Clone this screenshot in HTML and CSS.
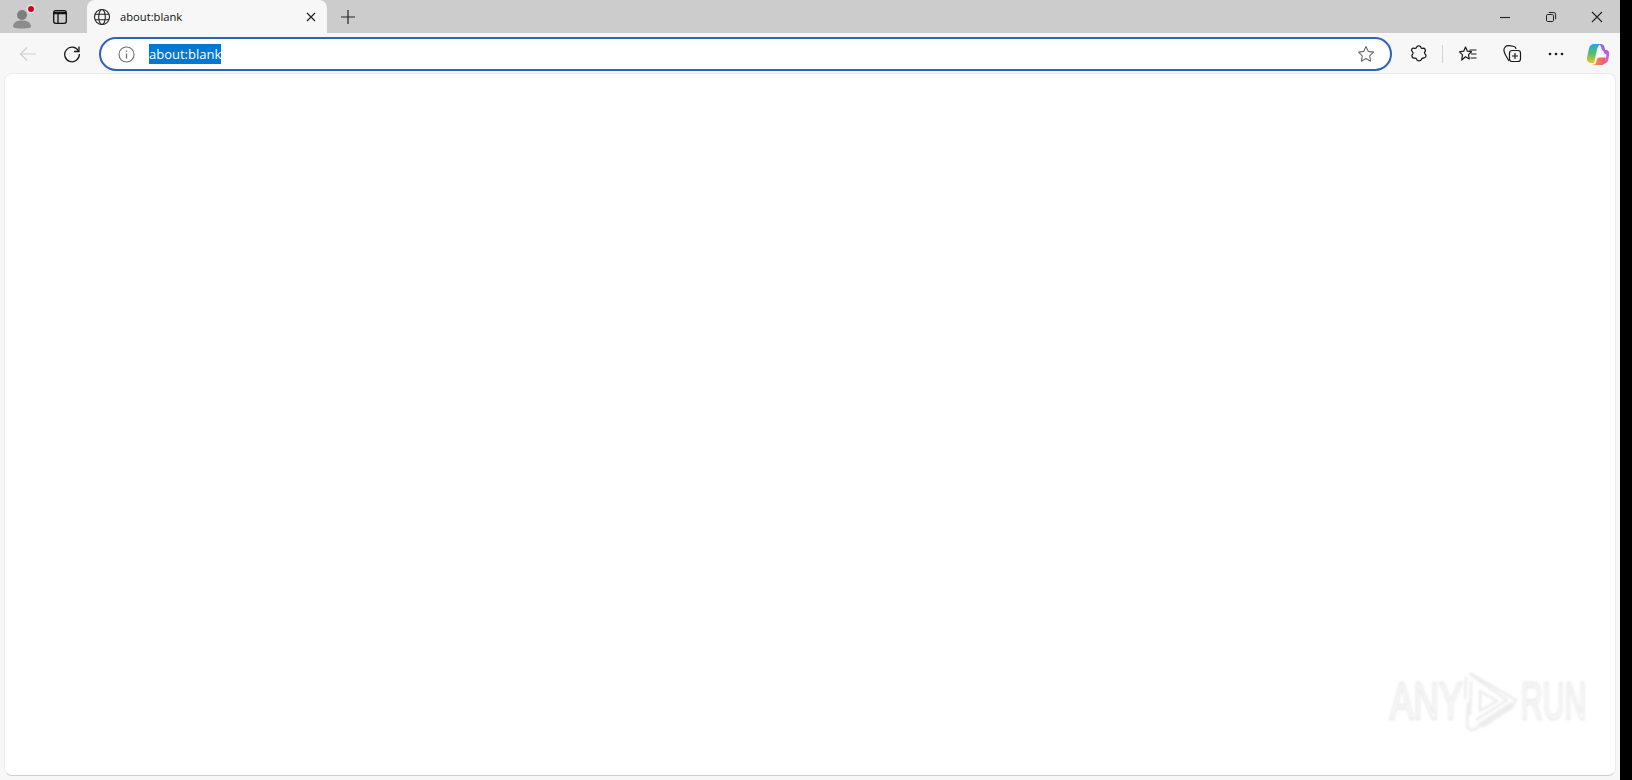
FILE: index.html
```html
<!DOCTYPE html>
<html>
<head>
  <title>about:blank</title>
  <link rel="stylesheet" href="styles.css">
</head>
<body>
  <div class="window">
    <!-- Tab strip -->
    <div class="tabstrip">
      <div class="btn profile">
        <svg width="26" height="26" viewBox="0 0 26 26">
          <circle cx="11" cy="11" r="5" fill="#7e7e7e"/>
          <path d="M2 23c0-5 4-6.500 9-6.500s9 1.500 9 6.500c-2 2-16 2-18 0z" fill="#8c8c8c"/>
          <circle cx="20" cy="5" r="4.500" fill="#f2f2f2" fill-opacity=".7"/>
          <circle cx="20" cy="5" r="3" fill="#d8001c"/>
        </svg>
      </div>
      <div class="btn sidebar">
        <svg width="16" height="16" viewBox="0 0 16 16" fill="none" stroke="#111" stroke-width="1.300">
          <rect x="1.700" y="1.700" width="12.600" height="12.600" rx="2"/>
          <path d="M1.700 4h12.600" stroke-width="2.500"/>
          <path d="M6 5v9"/>
        </svg>
      </div>
      <div class="tab">
        <svg class="tab-globe" width="18" height="18" viewBox="0 0 18 18" fill="none" stroke="#222" stroke-width="1.100">
          <circle cx="9" cy="9" r="7.500"/>
          <ellipse cx="9" cy="9" rx="3.300" ry="7.500"/>
          <path d="M2 6.300h14M2 11.700h14"/>
        </svg>
        <span class="tab-title">about:blank</span>
        <svg class="tab-close" width="10" height="10" viewBox="0 0 10 10" stroke="#222" stroke-width="1.200">
          <path d="M1 1l8 8M9 1l-8 8"/>
        </svg>
      </div>
      <div class="btn newtab">
        <svg width="16" height="16" viewBox="0 0 16 16" stroke="#222" stroke-width="1.200">
          <path d="M8 1v14M1 8h14"/>
        </svg>
      </div>
      <div class="winbtns">
        <div class="winbtn">
          <svg width="12" height="12" viewBox="0 0 12 12" stroke="#222" stroke-width="1.100"><path d="M1 6.500h10"/></svg>
        </div>
        <div class="winbtn">
          <svg width="12" height="12" viewBox="0 0 12 12" fill="none" stroke="#222" stroke-width="1"><rect x="1.500" y="3.500" width="7" height="7" rx="1.200"/><path d="M3.800 1.500h5a1.800 1.800 0 0 1 1.800 1.800v5"/></svg>
        </div>
        <div class="winbtn">
          <svg width="12" height="12" viewBox="0 0 12 12" stroke="#222" stroke-width="1.100"><path d="M1 1l10 10M11 1L1 11"/></svg>
        </div>
      </div>
    </div>

    <!-- Toolbar -->
    <div class="toolbar">
      <div class="btn back">
        <svg width="18" height="16" viewBox="0 0 18 16" fill="none" stroke="#cfcfcf" stroke-width="1.200"><path d="M17 8H1.500M8 1.500L1.500 8 8 14.500"/></svg>
      </div>
      <div class="btn reload">
        <svg width="18" height="18" viewBox="0 0 18 18" fill="none" stroke="#1a1a1a" stroke-width="1.300"><path d="M15.600 6.300A7.300 7.300 0 1 0 16.300 9"/><path d="M16 1.500v5h-5"/></svg>
      </div>
      <div class="address">
        <svg class="info" width="17" height="17" viewBox="0 0 17 17" fill="none" stroke="#707070" stroke-width="1.100">
          <circle cx="8.500" cy="8.500" r="7.500"/>
          <path d="M8.500 7.500v5" stroke-width="1.300"/>
          <path d="M8.500 4.500v1.300" stroke-width="1.300"/>
        </svg>
        <span class="url">about:blank</span>
        <svg class="addr-star" width="18" height="18" viewBox="0 0 18 18" fill="none" stroke="#6a6a6a" stroke-width="1.100" stroke-linejoin="round">
          <path d="M9 1.500l2.300 4.900 5.200.7-3.800 3.700.9 5.400L9 13.600l-4.600 2.600.9-5.400L1.500 7.100l5.200-.7z"/>
        </svg>
      </div>
      <div class="btn tool">
        <svg width="20" height="20" viewBox="0 0 20 20" fill="none" stroke="#1a1a1a" stroke-width="1.300" stroke-linejoin="round">
          <path d="M7.500 3.500C8 1.300 11.500 1.300 12 3.500c.2.700 1 1 1.700.8 2.200-.5 3.500 2 2.200 3.500-.5.600-.5 1.500 0 2 2 1.700 1 4.400-1.700 4.200-.8 0-1.400.4-1.700 1.200-.8 2.300-4.200 2.300-5-.1-.2-.7-1-1.100-1.800-1-2.400.3-3.700-2.300-2.100-4 .6-.7.600-1.600 0-2.200C1.300 6 3 3.700 5.700 4.300c.8.100 1.500-.200 1.800-.8z"/>
        </svg>
      </div>
      <div class="divider"></div>
      <div class="btn tool">
        <svg width="20" height="18" viewBox="0 0 20 18" fill="none" stroke="#1a1a1a" stroke-width="1.200" stroke-linejoin="round">
          <path d="M7.500 2l1.900 4.200 4.100.5-3 2.900.8 4.400-3.800-2.200-3.800 3.200.8-5.200L1.500 6.800l4.200-.6z"/>
          <path d="M11.500 5h7M13 9h5.500M12.500 13h6"/>
        </svg>
      </div>
      <div class="btn tool">
        <svg width="20" height="20" viewBox="0 0 20 20" fill="none" stroke="#1a1a1a" stroke-width="1.200">
          <path d="M7 17L3.500 11C2.500 9 1 6 2.500 4l1-1.300C4.500 1.700 6 1.500 7.500 1.700l4.500.8c1.300.3 2 1.200 2 2.500"/>
          <rect x="7.500" y="6.500" width="11" height="11" rx="2.500"/>
          <path d="M13 9v6M10 12h6"/>
        </svg>
      </div>
      <div class="btn tool">
        <svg width="16" height="4" viewBox="0 0 16 4" fill="#1a1a1a"><circle cx="2" cy="2" r="1.300"/><circle cx="8" cy="2" r="1.300"/><circle cx="14" cy="2" r="1.300"/></svg>
      </div>
      <div class="btn tool copilot">
        <svg width="24" height="23" viewBox="0 0 24 23" fill="none">
          <defs>
            <linearGradient id="cpA" x1="0" y1="0" x2="0" y2="1"><stop offset="0" stop-color="#2f9fe6"/><stop offset=".5" stop-color="#4fc26a"/><stop offset="1" stop-color="#f4c02f"/></linearGradient>
            <linearGradient id="cpB" x1="0" y1="0" x2="0" y2="1"><stop offset="0" stop-color="#8f63ee"/><stop offset="1" stop-color="#ea5fb4"/></linearGradient>
            <linearGradient id="cpC" x1="0" y1="0" x2="1" y2="0"><stop offset="0" stop-color="#f8a93a"/><stop offset="1" stop-color="#ee4f72"/></linearGradient>
          </defs>
          <path d="M8 1h8c-3 .5-4 2-4.800 5L8 20H6C2.500 20 .5 18 1 14.500L3 5.500C3.500 2.500 5.500 1 8 1z" fill="url(#cpA)"/>
          <path d="M13 1h1.500c2 0 3.500 1 4 3l.5 3h1c2.300 0 3.500 1.700 3.200 4l-1 6c-.4 2.200-2 3.500-4 3.500H16c3-1 3.500-3 4-5.500l.5-3.500-3.500-.5-1.500-5.500c-.3-1.500-1.200-3.500-2.500-4.500z" fill="url(#cpB)"/>
          <path d="M5 22h10.500c2 0 3-1.300 3.500-3l1-4.500h-6.500c-1.500 0-2.300.7-2.800 2.300L10 20c-.5 1.300-2 2-5 2z" fill="url(#cpC)"/>
          <path d="M11 7.500h6l1.500 3-1 3H10.300z" fill="#fff"/>
        </svg>
      </div>
    </div>

    <!-- Page area -->
    <div class="content">
      <div class="page">
        <div class="watermark">
          <span class="wm-text wm-any">ANY</span>
          <svg class="wm-logo" width="62" height="64" viewBox="0 0 62 64" fill="none" stroke="#ececec" stroke-width="2.500" stroke-linejoin="round">
            <path d="M12 4l46 27-3 4-38 25c-5 2-8 0-8-5l1-22"/>
            <path d="M8 8L7 30M13 12l-1 34"/>
            <path d="M13 5l3 3 33 23-31 20"/>
            <path d="M22 22l17 10-17 10z"/>
            <path d="M20 56l34-22M24 58l32-21"/>
          </svg>
          <span class="wm-text wm-run">RUN</span>
        </div>
      </div>
    </div>
  </div>
</body>
</html>
```
FILE: styles.css
```css
/* Base */
* {
  box-sizing: border-box;
}

body, html {
  margin: 0;
  padding: 0;
  height: 100%;
  overflow: hidden;
  background: #000;
  font-family: 'Open Sans', 'Noto Sans', sans-serif;
}

.window {
  width: 1620px;
  height: 780px;
  display: flex;
  flex-direction: column;
  background: #f7f7f7;
}

.btn {
  display: flex;
  align-items: center;
  justify-content: center;
  flex-shrink: 0;
}

/* Tab strip */
.tabstrip {
  height: 33px;
  display: flex;
  align-items: center;
  background: #cccccc;
}

.profile {
  width: 42px;
  padding-left: 5px;
}

.sidebar {
  width: 36px;
}

.tab {
  width: 240px;
  height: 33px;
  margin-left: 9px;
  padding: 0 11px 0 6px;
  display: flex;
  align-items: center;
  background: #f7f7f7;
  border-radius: 8px 8px 0 0;
}

.tab-globe {
  flex-shrink: 0;
}

.tab-title {
  flex: 1;
  margin-left: 9px;
  font-size: 11.200px;
  color: #111;
}

.newtab {
  width: 32px;
  margin-left: 5px;
}

.winbtns {
  margin-left: auto;
  display: flex;
}

.winbtn {
  width: 46px;
  height: 33px;
  display: flex;
  align-items: center;
  justify-content: center;
}

/* Toolbar */
.toolbar {
  height: 40px;
  padding: 2px 2px 0 8px;
  display: flex;
  align-items: center;
  background: #f7f7f7;
}

.back,
.reload {
  width: 40px;
}

.reload {
  margin-left: 4px;
}

.address {
  flex: 1;
  height: 34px;
  margin: 0 5px 0 7px;
  padding: 0 15px 0 17px;
  display: flex;
  align-items: center;
  background: #fff;
  border: 2px solid #2d62c4;
  border-radius: 17px;
}

.url {
  margin-left: 14px;
  padding: 0;
  font-size: 13px;
  line-height: 20px;
  color: #fff;
  background: #0078d4;
}

.addr-star {
  margin-left: auto;
}

.tool {
  width: 44px;
}

.copilot {
  width: 40px;
}

.divider {
  width: 1px;
  height: 18px;
  margin: 0 3px 0 1px;
  background: #d4d4d4;
}

/* Page area */
.content {
  flex: 1;
  padding: 0 4px 4px;
  display: flex;
}

.page {
  flex: 1;
  position: relative;
  background: #fff;
  border: 1px solid #ececec;
  border-bottom-color: #cfcfcf;
  border-radius: 8px;
}

/* Watermark */
.watermark {
  position: absolute;
  right: 32px;
  bottom: 42px;
  display: flex;
  align-items: center;
  filter: blur(0.8px);
}

.wm-text {
  font-family: 'Liberation Sans', sans-serif;
  font-size: 52px;
  line-height: 64px;
  color: #fff;
  -webkit-text-stroke: 2.500px #ececec;
}

.wm-any {
  width: 72px;
  transform: scaleX(0.68);
  transform-origin: left center;
}

.wm-run {
  width: 62px;
  transform: scaleX(0.58);
  transform-origin: left center;
}

.wm-logo {
  margin: 0 1px 0 -4px;
}
```
